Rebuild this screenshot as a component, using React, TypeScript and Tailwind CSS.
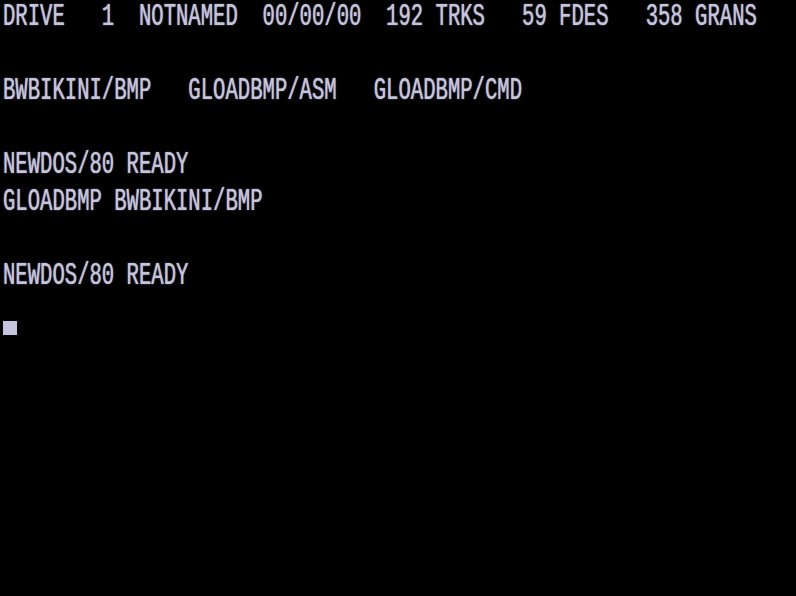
import React from "react";

const lines: string[] = [
  "DRIVE   1  NOTNAMED  00/00/00  192 TRKS   59 FDES   358 GRANS",
  "",
  "BWBIKINI/BMP   GLOADBMP/ASM   GLOADBMP/CMD",
  "",
  "NEWDOS/80 READY",
  "GLOADBMP BWBIKINI/BMP",
  "",
  "NEWDOS/80 READY",
];

export default function App() {
  return (
    <div className="w-[796px] h-[596px] bg-black overflow-hidden px-[3px] pt-[2px] text-[#c4c4de] font-['Liberation_Mono',monospace] text-[20.6px]">
      {lines.map((l, i) => (
        <div key={i} className="h-[37px] whitespace-pre">
          <span className="inline-block leading-[0.8] origin-top scale-y-[1.55] -translate-y-[4px] [text-shadow:0_0_1px_#c4c4de]">
            {l || " "}
          </span>
        </div>
      ))}
      <div className="h-[37px] pt-[23px]">
        <div className="w-[14px] h-[14px] bg-[#c4c4de]" />
      </div>
    </div>
  );
}
